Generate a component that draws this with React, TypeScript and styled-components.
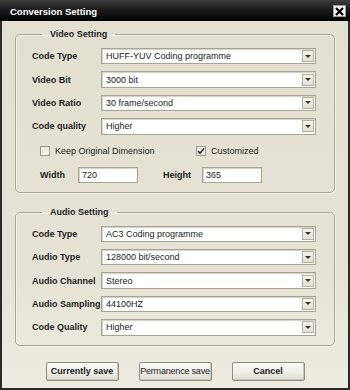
import React, { useState } from "react";
import styled, { createGlobalStyle } from "styled-components";

const GlobalStyle = createGlobalStyle`
  html, body {
    margin: 0;
    padding: 0;
    background: #1e1e1e;
  }
  * {
    box-sizing: border-box;
  }
`;

const videoRows = [
  { label: "Code Type", value: "HUFF-YUV Coding programme" },
  { label: "Video Bit", value: "3000 bit" },
  { label: "Video Ratio", value: "30 frame/second" },
  { label: "Code quality", value: "Higher" },
];

const audioRows = [
  { label: "Code Type", value: "AC3 Coding programme" },
  { label: "Audio Type", value: "128000 bit/second" },
  { label: "Audio Channel", value: "Stereo" },
  { label: "Audio Sampling", value: "44100HZ" },
  { label: "Code Quality", value: "Higher" },
];

const App: React.FC = () => {
  const [keep, setKeep] = useState(false);
  const [custom, setCustom] = useState(true);

  return (
    <>
      <GlobalStyle />
      <Window>
        <TitleBar>
          <Title>Conversion Setting</Title>
          <CloseButton>
            <svg width="9" height="9" viewBox="0 0 9 9">
              <path d="M1 1 L8 8 M8 1 L1 8" stroke="#000" strokeWidth="2.2" />
            </svg>
          </CloseButton>
        </TitleBar>
        <Body>
          <Group>
            <Legend>Video Setting</Legend>
            <Rows>
              {videoRows.map(r => (
                <Row key={r.label}>
                  <Label>{r.label}</Label>
                  <Select>
                    <SelectText>{r.value}</SelectText>
                    <ArrowButton>
                      <Arrow />
                    </ArrowButton>
                  </Select>
                </Row>
              ))}
            </Rows>
            <CheckRow>
              <CheckItem onClick={() => setKeep(!keep)}>
                <CheckBox>{keep && <CheckMark />}</CheckBox>
                <CheckText>Keep Original Dimension</CheckText>
              </CheckItem>
              <CheckItem $left={196} onClick={() => setCustom(!custom)}>
                <CheckBox>{custom && <CheckMark />}</CheckBox>
                <CheckText>Customized</CheckText>
              </CheckItem>
            </CheckRow>
            <SizeRow>
              <SizeLabel>Width</SizeLabel>
              <TextInput>720</TextInput>
              <SizeLabel $wide>Height</SizeLabel>
              <TextInput>365</TextInput>
            </SizeRow>
          </Group>
          <Group $audio>
            <Legend>Audio Setting</Legend>
            <Rows>
              {audioRows.map(r => (
                <Row key={r.label}>
                  <Label>{r.label}</Label>
                  <Select>
                    <SelectText>{r.value}</SelectText>
                    <ArrowButton>
                      <Arrow />
                    </ArrowButton>
                  </Select>
                </Row>
              ))}
            </Rows>
          </Group>
          <ButtonBar>
            <Button>Currently save</Button>
            <Button $light>Permanence save</Button>
            <Button>Cancel</Button>
          </ButtonBar>
        </Body>
      </Window>
    </>
  );
};

const CheckMark: React.FC = () => (
  <svg width="8" height="8" viewBox="0 0 8 8">
    <path d="M1 4 L3 6.3 L7 1.5" stroke="#2a2a2a" strokeWidth="1.6" fill="none" />
  </svg>
);

const Window = styled.div`
  width: 350px;
  height: 390px;
  display: flex;
  flex-direction: column;
  background: #2a2a2a;
  font-family: "Liberation Sans", Arial, sans-serif;
  font-size: 9px;
  color: #1c1c1c;
`;

const TitleBar = styled.div`
  height: 21px;
  flex-shrink: 0;
  display: flex;
  align-items: center;
  justify-content: space-between;
  padding: 0 4px 0 10px;
  background: linear-gradient(#3e3e3e 0%, #1c1c1c 45%, #020202 100%);
`;

const Title = styled.div`
  color: #ffffff;
  font-weight: bold;
  font-size: 9.5px;
  padding-top: 1px;
`;

const CloseButton = styled.div`
  width: 13px;
  height: 12px;
  margin-top: 1px;
  display: flex;
  align-items: center;
  justify-content: center;
  background: #f4f4f4;
  border: 1px solid #9a9a9a;
`;

const Body = styled.div`
  flex: 1;
  margin: 0 2px 2px 2px;
  padding: 8px 13px 0 13px;
  background: linear-gradient(#e3dfd1 0%, #e6e3d6 70%, #eeece1 100%);
  display: flex;
  flex-direction: column;
`;

const Group = styled.fieldset<{ $audio?: boolean }>`
  margin: ${p => (p.$audio ? "14px 0 0 0" : "0")};
  padding: 8px 18px 9px 16px;
  border: 1px solid #a9a595;
  border-radius: 5px;
  box-shadow: inset 1px 1px 0 #f4f2ea, 1px 1px 0 #f4f2ea;
`;

const Legend = styled.legend`
  margin-left: 10px;
  padding: 0 8px;
  font-weight: bold;
  font-size: 9px;
  line-height: 11px;
  color: #1c1c1c;
`;

const Rows = styled.div`
  display: flex;
  flex-direction: column;
  gap: 7px;
`;

const Row = styled.div`
  display: flex;
  align-items: center;
  height: 16.4px;
`;

const Label = styled.div`
  width: 69px;
  flex-shrink: 0;
  font-weight: bold;
  white-space: nowrap;
`;

const Select = styled.div`
  flex: 1;
  height: 16.4px;
  display: flex;
  align-items: center;
  justify-content: space-between;
  background: #ffffff;
  border: 1px solid #a8a493;
  box-shadow: inset 1px 1px 0 #d6d3c7;
  padding: 0 1px 0 4px;
`;

const SelectText = styled.span`
  white-space: nowrap;
  color: #1c1c1c;
`;

const ArrowButton = styled.div`
  width: 12px;
  height: 12px;
  display: flex;
  align-items: center;
  justify-content: center;
  background: linear-gradient(#f4f3ee, #e2e0d6);
  border: 1px solid #b3af9f;
`;

const Arrow = styled.div`
  width: 0;
  height: 0;
  border-left: 3px solid transparent;
  border-right: 3px solid transparent;
  border-top: 3px solid #3b3222;
`;

const CheckRow = styled.div`
  position: relative;
  height: 12px;
  margin-top: 10px;
  display: flex;
  align-items: center;
`;

const CheckItem = styled.div<{ $left?: number }>`
  position: absolute;
  left: ${p => (p.$left ?? 40) - 32}px;
  display: flex;
  align-items: center;
  gap: 5px;
  cursor: pointer;
`;

const CheckBox = styled.div`
  width: 10px;
  height: 10px;
  display: flex;
  align-items: center;
  justify-content: center;
  background: linear-gradient(#e8e6de, #f6f5f1);
  border: 1px solid #9d998a;
`;

const CheckText = styled.span`
  color: #1c1c1c;
`;

const SizeRow = styled.div`
  display: flex;
  align-items: center;
  margin-top: 10px;
  padding-left: 8px;
  height: 16px;
`;

const SizeLabel = styled.div<{ $wide?: boolean }>`
  font-weight: bold;
  width: ${p => (p.$wide ? "39px" : "38px")};
  margin-left: ${p => (p.$wide ? "25px" : "0")};
`;

const TextInput = styled.div`
  width: 60px;
  height: 16px;
  display: flex;
  align-items: center;
  padding-left: 3px;
  background: #ffffff;
  border: 1px solid #a8a493;
  box-shadow: inset 1px 1px 0 #d6d3c7;
`;

const ButtonBar = styled.div`
  display: flex;
  justify-content: center;
  gap: 20px;
  margin-top: 16px;
`;

const Button = styled.div<{ $light?: boolean }>`
  width: 73px;
  height: 19px;
  display: flex;
  align-items: center;
  justify-content: center;
  white-space: nowrap;
  letter-spacing: ${p => (p.$light ? "-0.2px" : "0")};
  font-weight: ${p => (p.$light ? "normal" : "bold")};
  color: #1c1c1c;
  background: linear-gradient(#fbfbf8 0%, #efeee8 50%, #dedcd3 100%);
  border: 1px solid #8f8c82;
  border-radius: 2px;
  box-shadow: inset -1px -1px 0 #c8c5bb;
  cursor: pointer;
`;

export default App;
